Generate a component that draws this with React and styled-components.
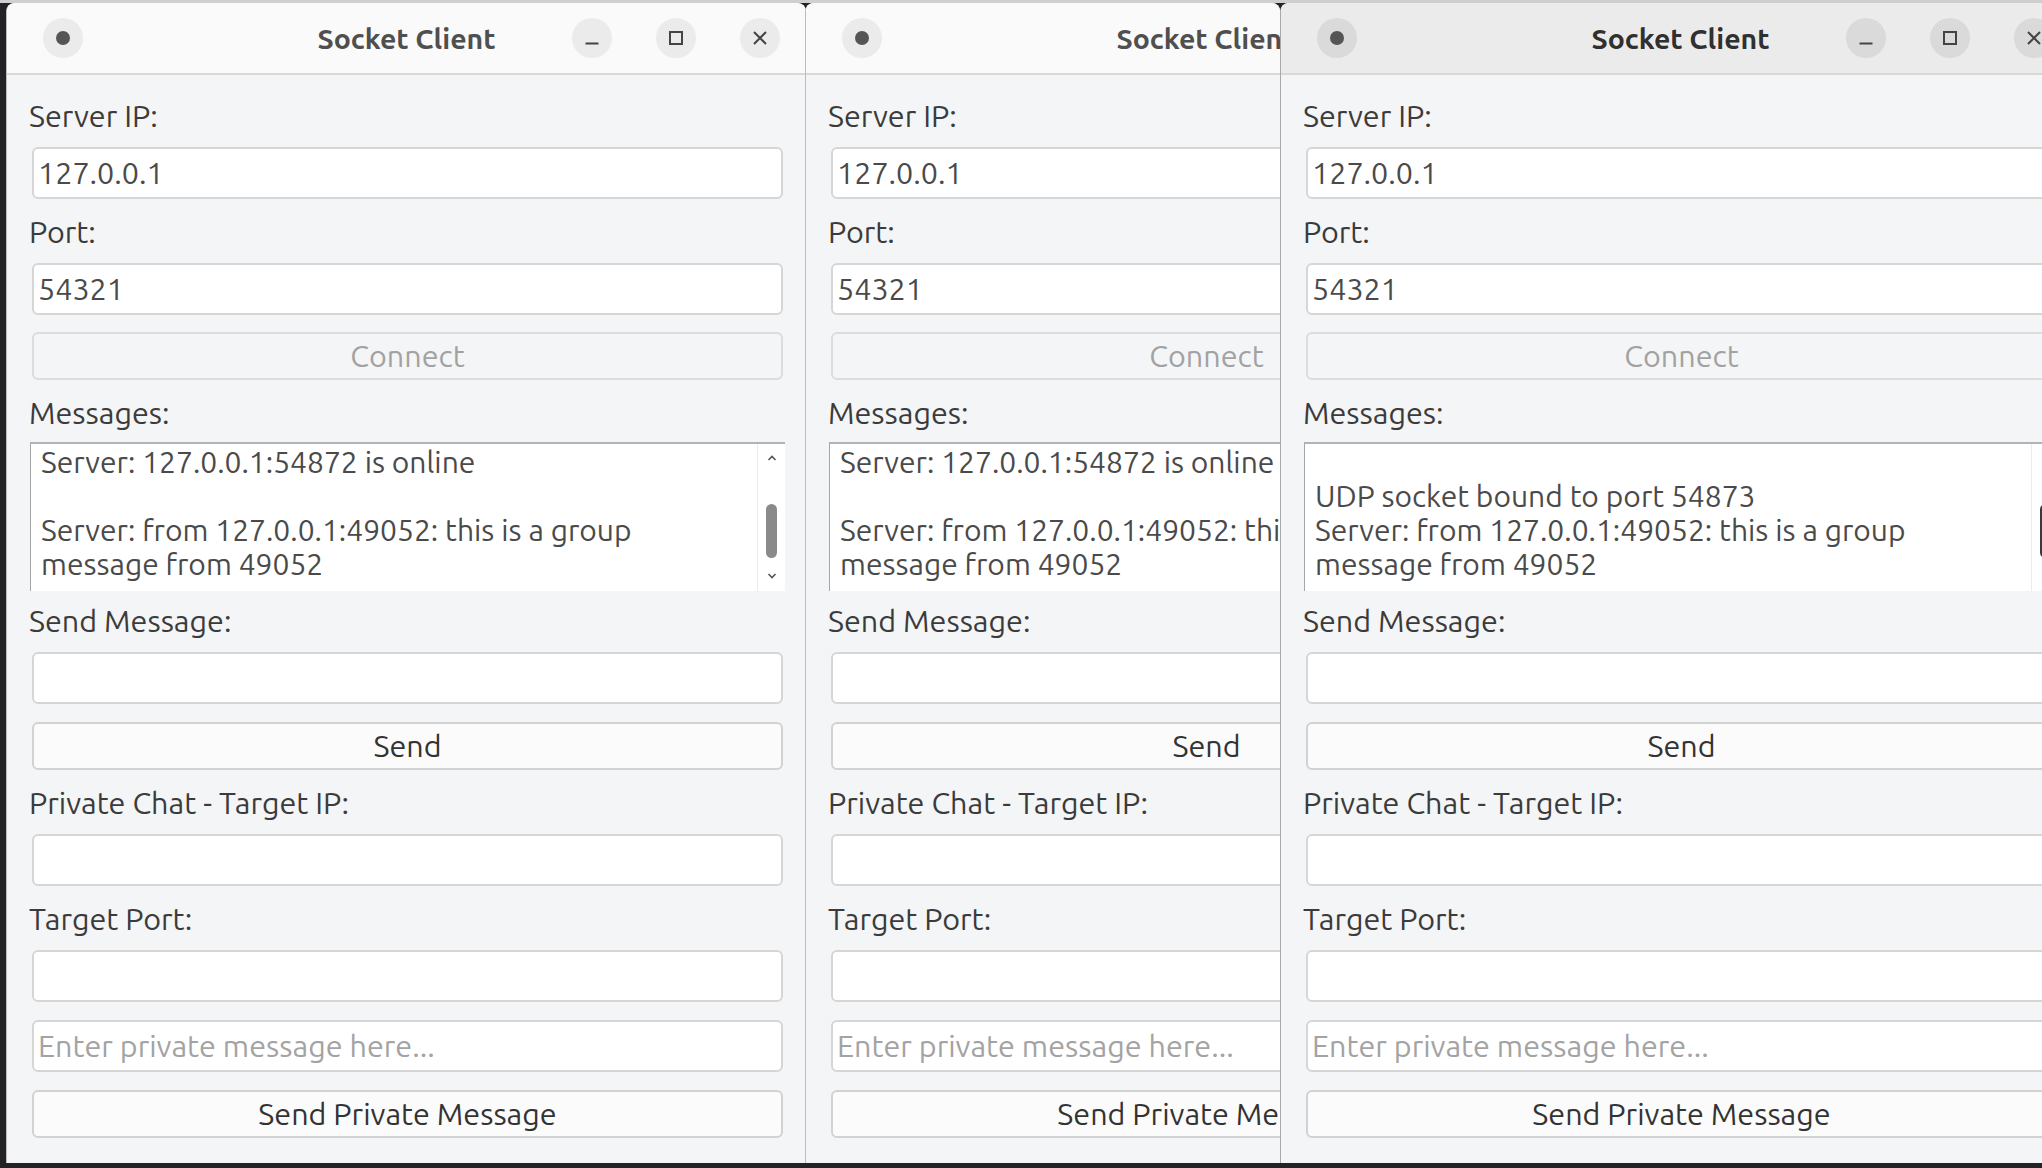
import React from 'react';
import styled, { createGlobalStyle } from 'styled-components';

const GlobalStyle = createGlobalStyle`
  body {
    margin: 0;
    background: #222226;
    overflow: hidden;
    font-family: Ubuntu, "Liberation Sans", Arial, sans-serif;
  }
`;

const Desktop = styled.div`
  position: relative;
  width: 2042px;
  height: 1168px;
  box-sizing: border-box;
  border-top: 3px solid #cfcfcf;
  background: #232327;
  overflow: hidden;
`;

// the slot is what the desktop places; a window partly hidden by another gets a narrower slot
const WindowSlot = styled.div`
  position: absolute;
  top: 0;
  left: ${(p) => p.$x}px;
  z-index: ${(p) => p.$z};
  width: ${(p) => p.$w}px;
  height: 1160px;
  overflow: hidden;
  border-radius: 8px 8px 0 0;
`;

const WindowFrame = styled.div`
  width: 800px;
  height: 1160px;
  box-sizing: border-box;
  display: flex;
  flex-direction: column;
  background: #f4f5f6;
  border-left: 1px solid ${(p) => (p.$active ? '#a9a9a9' : '#bcbcbc')};
  border-radius: 8px 8px 0 0;
  overflow: hidden;
`;

const TitleBar = styled.div`
  flex: none;
  height: 70px;
  display: grid;
  grid-template-columns: 1fr auto 1fr;
  align-items: center;
  padding: 0 26px;
  background: ${(p) => (p.$active ? '#ebebeb' : '#fafafa')};
  border-bottom: 2px solid #d8d8d8;
`;

const TitleText = styled.div`
  font-size: 28.5px;
  font-weight: 700;
  color: ${(p) => (p.$active ? '#303030' : '#4f4f4f')};
  white-space: nowrap;
`;

const LeftControls = styled.div`
  display: flex;
  padding-left: 10px;
`;

const RightControls = styled.div`
  display: flex;
  justify-content: flex-end;
  gap: 44px;
`;

const RoundButton = styled.div`
  width: 40px;
  height: 40px;
  border-radius: 50%;
  display: grid;
  place-items: center;
  background: ${(p) => (p.$active ? '#dadada' : '#ebebeb')};
`;

const Body = styled.div`
  flex: 1;
  display: flex;
  flex-direction: column;
  padding: 24px 23px 24px 22px;
`;

const Label = styled.div`
  height: 34px;
  line-height: 34px;
  font-size: 30.5px;
  color: #3b3b3b;
  margin: 16px 0 14px;
  white-space: nowrap;

  &:first-child {
    margin-top: 0;
  }
`;

const Field = styled.input`
  display: block;
  height: 52px;
  box-sizing: border-box;
  margin: 0 0 0 3px;
  padding: 0 4px;
  border: 2px solid #d6d6d6;
  border-radius: 6px;
  background: #ffffff;
  font-family: inherit;
  font-size: 30.5px;
  color: #4a4a4a;
  outline: none;

  & + & {
    margin-top: 18px;
  }

  &::placeholder {
    color: #a3a3a3;
  }
`;

const PushButton = styled.button`
  display: block;
  height: 48px;
  box-sizing: border-box;
  margin: ${(p) => p.$top}px 0 0 3px;
  padding: 0;
  border: 2px solid ${(p) => (p.disabled ? '#dcdcdc' : '#d2d2d2')};
  border-radius: 6px;
  background: ${(p) => (p.disabled ? '#f4f5f6' : '#fbfbfb')};
  font-family: inherit;
  font-size: 30.5px;
  color: ${(p) => (p.disabled ? '#a2a2a2' : '#333333')};
  white-space: nowrap;
`;

const MessageBox = styled.div`
  flex: none;
  height: 149px;
  display: flex;
  margin: -2px -2px -3px 1px;
  box-sizing: border-box;
  background: #ffffff;
  border-top: 2px solid #b3b3b3;
  border-left: 1px solid #a6a6a6;
`;

const MessageText = styled.div`
  flex: 1;
  padding: 1px 0 0 10px;
  font-size: 30px;
  line-height: 34px;
  color: #4a4a4a;
  white-space: pre;
  overflow: hidden;
`;

const ScrollTrack = styled.div`
  flex: none;
  width: 27px;
  display: flex;
  flex-direction: column;
  align-items: center;
  border-left: 1px solid #ececec;
`;

const ScrollThumb = styled.div`
  width: 11px;
  height: 54px;
  margin: 42px 0 14px;
  border-radius: 6px;
  background: ${(p) => (p.$active ? '#3a3a3a' : '#8a8a8a')};
`;

const ArrowUp = () => (
  <svg width="10" height="8" viewBox="0 0 10 8" style={{ marginTop: 10 }}>
    <path d="M1.5 6 L5 2.5 L8.5 6" fill="none" stroke="#555" strokeWidth="1.6" />
  </svg>
);

const ArrowDown = () => (
  <svg width="10" height="8" viewBox="0 0 10 8">
    <path d="M1.5 2 L5 5.5 L8.5 2" fill="none" stroke="#555" strokeWidth="1.6" />
  </svg>
);

const MenuDot = () => (
  <svg width="16" height="16" viewBox="0 0 16 16">
    <circle cx="8" cy="8" r="7" fill="#555555" />
  </svg>
);

const MinimizeIcon = () => (
  <svg width="16" height="16" viewBox="0 0 16 16">
    <path d="M1.5 13.5 H14.5" stroke="#444" strokeWidth="2" />
  </svg>
);

const MaximizeIcon = () => (
  <svg width="16" height="16" viewBox="0 0 16 16">
    <rect x="2" y="2" width="12" height="12" fill="none" stroke="#444" strokeWidth="2" />
  </svg>
);

const CloseIcon = () => (
  <svg width="16" height="16" viewBox="0 0 16 16">
    <path d="M2 2 L14 14 M14 2 L2 14" stroke="#444" strokeWidth="2" />
  </svg>
);

const groupMessage = [
  'Server: from 127.0.0.1:49052: this is a group',
  'message from 49052',
];

function ClientWindow({ x, z, visible = 800, active, lines }) {
  return (
    <WindowSlot $x={x} $z={z} $w={visible}>
      <WindowFrame $active={active}>
        <TitleBar $active={active}>
          <LeftControls>
            <RoundButton $active={active}>
              <MenuDot />
            </RoundButton>
          </LeftControls>
          <TitleText $active={active}>Socket Client</TitleText>
          <RightControls>
            <RoundButton $active={active}>
              <MinimizeIcon />
            </RoundButton>
            <RoundButton $active={active}>
              <MaximizeIcon />
            </RoundButton>
            <RoundButton $active={active}>
              <CloseIcon />
            </RoundButton>
          </RightControls>
        </TitleBar>
        <Body>
          <Label>Server IP:</Label>
          <Field defaultValue="127.0.0.1" />
          <Label>Port:</Label>
          <Field defaultValue="54321" />
          <PushButton $top={17} disabled>
            Connect
          </PushButton>
          <Label>Messages:</Label>
          <MessageBox>
            <MessageText>{lines.join('\n')}</MessageText>
            <ScrollTrack>
              <ArrowUp />
              <ScrollThumb $active={active} />
              <ArrowDown />
            </ScrollTrack>
          </MessageBox>
          <Label>Send Message:</Label>
          <Field />
          <PushButton $top={18}>Send</PushButton>
          <Label>Private Chat - Target IP:</Label>
          <Field />
          <Label>Target Port:</Label>
          <Field />
          <Field placeholder="Enter private message here..." />
          <PushButton $top={18}>Send Private Message</PushButton>
        </Body>
      </WindowFrame>
    </WindowSlot>
  );
}

const App = () => (
  <>
    <GlobalStyle />
    <Desktop>
      <ClientWindow
        x={6}
        z={1}
        lines={['Server: 127.0.0.1:54872 is online', '', ...groupMessage]}
      />
      <ClientWindow
        x={805}
        z={2}
        visible={475}
        lines={['Server: 127.0.0.1:54872 is online', '', ...groupMessage]}
      />
      <ClientWindow
        x={1280}
        z={3}
        active
        lines={['', 'UDP socket bound to port 54873', ...groupMessage]}
      />
    </Desktop>
  </>
);

export default App;
